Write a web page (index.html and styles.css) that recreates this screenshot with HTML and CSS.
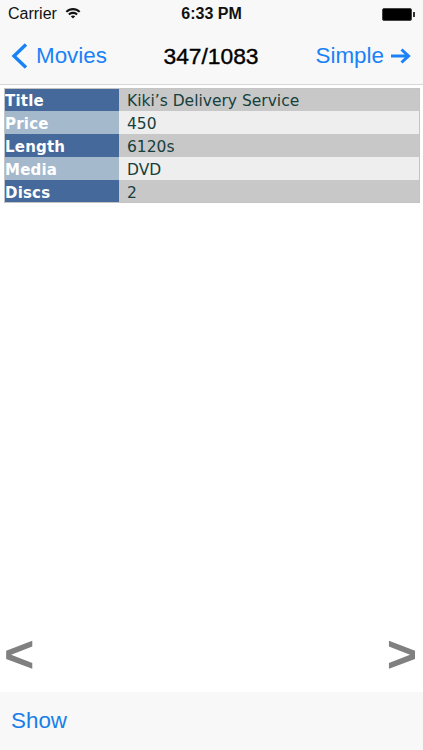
FILE: index.html
```html
<!DOCTYPE html>
<html lang="en">
<head>
<meta charset="utf-8">
<title>Movie</title>
<link rel="stylesheet" href="styles.css">
</head>
<body>
<div class="app">
  <header class="header">
    <div class="status">
      <div class="status-left">
        <span>Carrier</span>
        <svg class="wifi" viewBox="0 0 16 12" width="16" height="12"><path d="M0.6 4.2C4.8 0 11.2 0 15.4 4.2L14 5.6C10.500 2.300 5.500 2.300 2 5.600Z M3.200 6.800C6 4.200 10 4.200 12.800 6.800L11.400 8.200C9.400 6.500 6.600 6.500 4.600 8.200Z M5.800 9.200C7 8.100 9 8.100 10.200 9.200L8 11.500Z" fill="#111"/></svg>
      </div>
      <div class="status-time">6:33 PM</div>
      <div class="status-right">
        <span class="battery"></span><span class="battery-tip"></span>
      </div>
    </div>
    <nav class="nav">
      <div class="nav-left">
        <svg class="chevron" viewBox="0 0 17 26" width="17" height="26"><path d="M15 1.500L3 13L15 24.500" fill="none" stroke="#1a82f7" stroke-width="3.400"/></svg>
        <span>Movies</span>
      </div>
      <div class="nav-title">347/1083</div>
      <div class="nav-right">
        <span>Simple</span>
        <svg class="arrow" viewBox="0 0 21 16" width="21" height="16"><path d="M1 8H18M11.500 1.500L18.500 8L11.500 14.500" fill="none" stroke="#1a82f7" stroke-width="3"/></svg>
      </div>
    </nav>
  </header>
  <main class="content">
    <table class="details">
      <tr class="row-dark"><th>Title</th><td>Kiki’s Delivery Service</td></tr>
      <tr class="row-light"><th>Price</th><td>450</td></tr>
      <tr class="row-dark"><th>Length</th><td>6120s</td></tr>
      <tr class="row-light"><th>Media</th><td>DVD</td></tr>
      <tr class="row-dark"><th>Discs</th><td>2</td></tr>
    </table>
    <div class="pager">
      <span>&lt;</span>
      <span>&gt;</span>
    </div>
  </main>
  <footer class="toolbar">Show</footer>
</div>
</body>
</html>
```
FILE: styles.css
```css
* { box-sizing: border-box; }
html, body { margin: 0; padding: 0; }
body {
  width: 423px;
  height: 750px;
  overflow: hidden;
  background: #fff;
  font-family: "Liberation Sans", Arial, sans-serif;
}
.app { display: flex; flex-direction: column; height: 750px; }
.header {
  height: 85px;
  background: #f8f8f8;
  border-bottom: 1px solid #d6d6d6;
  display: flex;
  flex-direction: column;
}
.status {
  height: 28px;
  padding: 0 8px 0 8px;
  display: grid;
  grid-template-columns: 1fr auto 1fr;
  align-items: center;
  font-size: 16px;
  color: #111;
}
.status-left { display: flex; align-items: center; gap: 8px; }
.wifi { margin-bottom: 3px; }
.status-time { font-weight: bold; }
.status-right { display: flex; align-items: center; justify-content: flex-end; }
.battery {
  width: 30px;
  height: 13px;
  border: 1px solid #444;
  border-radius: 2px;
  background: #000;
  display: block;
}
.battery-tip { width: 2px; height: 5px; background: #333; margin-left: 1px; }
.nav {
  height: 56px;
  padding: 0 12px 0 11px;
  display: grid;
  grid-template-columns: 1fr auto 1fr;
  align-items: center;
  font-size: 22.400px;
  color: #1a82f7;
}
.nav-left { display: flex; align-items: center; gap: 8px; }
.nav-right { display: flex; align-items: center; justify-content: flex-end; gap: 6px; }
.nav-title { color: #000; font-size: 22.800px; -webkit-text-stroke: 0.4px #000; }
.content { flex: 1; display: flex; flex-direction: column; padding: 3px 3px 0 4px; }
.details {
  border-collapse: separate;
  border-spacing: 0;
  width: 416px;
  table-layout: fixed;
  font-family: "DejaVu Sans", Verdana, sans-serif;
  font-size: 15.500px;
  outline: 1px solid #c4c4c4;
  outline-offset: -1px;
}
.details tr { height: 23px; }
.details th {
  width: 115px;
  padding: 2px 0 0 1px;
  text-align: left;
  font-weight: bold;
  font-size: 15px;
  letter-spacing: 0.200px;
  color: #fff;
}
.details td { padding: 2px 0 0 8px; color: #16403c; }
.row-dark th { background: #46699b; }
.row-dark td { background: #c8c8c8; }
.row-light th { background: #a5b9cd; }
.row-light td { background: #eeeeee; }
.pager {
  margin-top: auto;
  height: 60px;
  margin-bottom: 8px;
  padding: 0 3px 0 0;
  display: flex;
  justify-content: space-between;
  font-size: 52px;
  font-weight: bold;
  line-height: 60px;
  color: #808080;
}
.toolbar {
  height: 58px;
  background: #f8f8f8;
  padding: 0 11px;
  display: flex;
  align-items: center;
  font-size: 22.400px;
  color: #1a7fe8;
}
```
